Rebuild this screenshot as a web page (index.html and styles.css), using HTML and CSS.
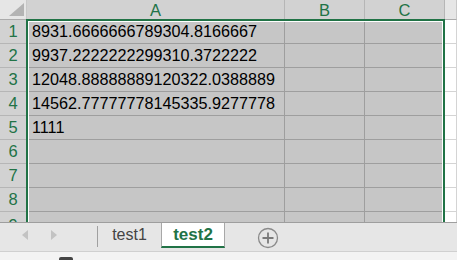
FILE: index.html
```html
<!DOCTYPE html>
<html>
<head>
<meta charset="utf-8">
<link rel="stylesheet" href="styles.css">
</head>
<body>
<div class="app">
  <div class="sheet">
    <div class="grid">
      <div class="corner"><svg width="27" height="20" viewBox="0 0 27 20"><polygon points="24,3 24,16 9,16" fill="#b3b3b3"/></svg></div>
      <div class="colhead sel">A</div>
      <div class="colhead sel">B</div>
      <div class="colhead sel">C</div>
      <div class="colhead"></div>

      <div class="rowhead">1</div><div class="cell s">8931.6666666789304.8166667</div><div class="cell s"></div><div class="cell s"></div><div class="cell"></div>
      <div class="rowhead">2</div><div class="cell s">9937.2222222299310.3722222</div><div class="cell s"></div><div class="cell s"></div><div class="cell"></div>
      <div class="rowhead">3</div><div class="cell s">12048.88888889120322.0388889</div><div class="cell s"></div><div class="cell s"></div><div class="cell"></div>
      <div class="rowhead">4</div><div class="cell s">14562.77777778145335.9277778</div><div class="cell s"></div><div class="cell s"></div><div class="cell"></div>
      <div class="rowhead">5</div><div class="cell s">1111</div><div class="cell s"></div><div class="cell s"></div><div class="cell"></div>
      <div class="rowhead">6</div><div class="cell s"></div><div class="cell s"></div><div class="cell s"></div><div class="cell"></div>
      <div class="rowhead">7</div><div class="cell s"></div><div class="cell s"></div><div class="cell s"></div><div class="cell"></div>
      <div class="rowhead">8</div><div class="cell s"></div><div class="cell s"></div><div class="cell s"></div><div class="cell"></div>
      <div class="rowhead last">9</div><div class="cell s"></div><div class="cell s"></div><div class="cell s"></div><div class="cell"></div>
    </div>
    <div class="selection"></div>
  </div>
  <div class="tabbar">
    <div class="nav">
      <svg class="arrow left" width="6" height="10" viewBox="0 0 6 10"><polygon points="6,0 6,10 0,5" fill="#c3c3c3"/></svg>
      <svg class="arrow right" width="6" height="10" viewBox="0 0 6 10"><polygon points="0,0 0,10 6,5" fill="#c3c3c3"/></svg>
    </div>
    <div class="sep"></div>
    <div class="tab">test1</div>
    <div class="tab active">test2</div>
    <div class="add">
      <svg width="22" height="22" viewBox="0 0 22 22"><circle cx="11" cy="11" r="9.5" fill="none" stroke="#8a8a8a" stroke-width="1.3"/><path d="M11 5.5v11M5.5 11h11" stroke="#7a7a7a" stroke-width="1.8"/></svg>
    </div>
  </div>
  <div class="status">
    <div class="status-icon"></div>
  </div>
</div>
</body>
</html>
```

FILE: styles.css
```css
html, body {
  margin: 0;
  padding: 0;
  background: #ffffff;
}
.app {
  width: 457px;
  height: 260px;
  overflow: hidden;
  font-family: "Liberation Sans", Arial, sans-serif;
  display: flex;
  flex-direction: column;
}
.sheet {
  position: relative;
  height: 222px;
  overflow: hidden;
  flex: none;
}
.grid {
  display: grid;
  grid-template-columns: 27px 258px 80px 80px 1fr;
  grid-template-rows: 20px repeat(9, 24px);
}
.corner {
  background: #e6e6e6;
  border-right: 1px solid #c8c8c8;
  border-bottom: 1px solid #ababab;
  box-sizing: border-box;
  height: 20px;
}
.corner svg { display: block; }
.colhead {
  background: #e6e6e6;
  border-right: 1px solid #c8c8c8;
  border-bottom: 1px solid #ababab;
  box-sizing: border-box;
  font-size: 16.5px;
  line-height: 20px;
  text-align: center;
  color: #217346;
}
.colhead.sel {
  background: #d2d2d2;
  border-right-color: #b6b6b6;
}
.rowhead {
  background: #d2d2d2;
  border-right: 1px solid #ababab;
  border-bottom: 1px solid #b6b6b6;
  box-sizing: border-box;
  font-size: 16.5px;
  line-height: 23px;
  text-align: center;
  color: #217346;
}
.rowhead.last {
  line-height: 26px;
}
.cell {
  background: #ffffff;
  border-right: 1px solid #d4d4d4;
  border-bottom: 1px solid #d4d4d4;
  box-sizing: border-box;
  font-size: 16.2px;
  line-height: 23px;
  padding-left: 5px;
  color: #000000;
  white-space: nowrap;
}
.cell.s {
  background: #c6c6c6;
  border-right-color: #9e9e9e;
  border-bottom-color: #9e9e9e;
}
.selection {
  position: absolute;
  left: 26px;
  top: 19px;
  width: 419px;
  height: 240px;
  border: 2px solid #217346;
  box-sizing: border-box;
  box-shadow: inset 1px 1px 0 #ffffff, inset -1px 0 0 #ffffff;
  pointer-events: none;
}
.tabbar {
  height: 29px;
  flex: none;
  background: #e6e6e6;
  border-top: 1px solid #9e9e9e;
  box-sizing: border-box;
  display: flex;
  align-items: flex-start;
}
.nav {
  width: 97px;
  height: 28px;
  display: flex;
  align-items: center;
  padding-left: 22px;
  box-sizing: border-box;
  gap: 23px;
}
.arrow { display: block; margin-top: -4px; }
.sep {
  width: 1px;
  height: 21px;
  margin-top: 3px;
  background: #a0a0a0;
}
.tab {
  width: 63px;
  height: 25px;
  font-size: 16px;
  line-height: 23px;
  text-align: center;
  color: #444444;
  box-sizing: border-box;
}
.tab.active {
  width: 64px;
  background: #ffffff;
  color: #217346;
  font-weight: bold;
  font-size: 17px;
  border-left: 1px solid #a8a8a8;
  border-right: 1px solid #a8a8a8;
  border-bottom: 2px solid #217346;
}
.add {
  margin-left: 32px;
  margin-top: 4px;
}
.add svg { display: block; }
.status {
  flex: 1;
  background: #f3f3f3;
  border-top: 1px solid #d0d0d0;
  position: relative;
}
.status-icon {
  margin-left: 59px;
  margin-top: 5px;
  width: 14px;
  height: 4px;
  background: #444444;
  border-radius: 2px 2px 0 0;
}
```
